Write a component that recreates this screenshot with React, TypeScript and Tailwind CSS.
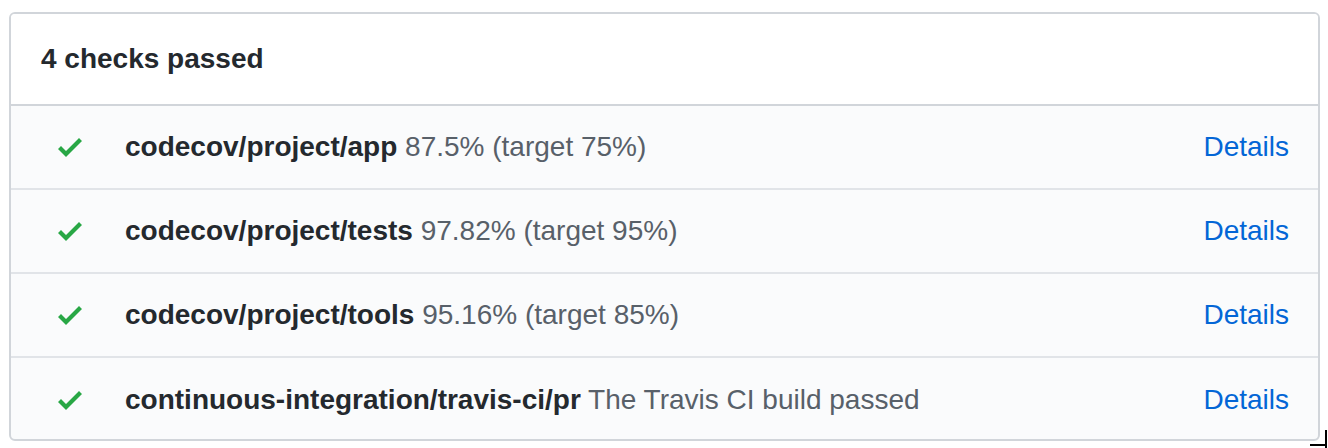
const checks = [
  { name: 'codecov/project/app', desc: '87.5% (target 75%)' },
  { name: 'codecov/project/tests', desc: '97.82% (target 95%)' },
  { name: 'codecov/project/tools', desc: '95.16% (target 85%)' },
  { name: 'continuous-integration/travis-ci/pr', desc: 'The Travis CI build passed' },
];

function CheckIcon() {
  return (
    <svg width="24" height="32" viewBox="0 0 12 16" className="shrink-0 fill-[#28a745]">
      <path fillRule="evenodd" d="M12 5l-8 8-4-4 1.5-1.5L4 10l6.5-6.5L12 5z" />
    </svg>
  );
}

export default function App() {
  return (
    <div
      className="relative w-[1328px] h-[448px] bg-white pt-[12px] pl-[9px] pr-[8px] pb-[7px] text-[28px] text-[#24292e]"
      style={{ fontFamily: '"Liberation Sans", Arial, sans-serif' }}
    >
      <div className="h-full border-2 border-[#d1d5da] rounded-[6px] overflow-hidden flex flex-col bg-[#fafbfc]">
        <div className="h-[92px] shrink-0 flex items-center pl-[30px] font-bold bg-white border-b-2 border-[#d1d5da]">
          4 checks passed
        </div>
        {checks.map((c, i) => (
          <div
            key={c.name}
            className={`h-[84px] shrink-0 flex items-center pl-[47px] pr-[29px] ${i < checks.length - 1 ? 'border-b-2 border-[#e1e4e8]' : ''}`}
          >
            <CheckIcon />
            <div className="ml-[43px] flex-1 whitespace-nowrap">
              <span className="font-bold">{c.name}</span>{' '}
              <span className="text-[#586069]">{c.desc}</span>
            </div>
            <a className="text-[#0366d6]">Details</a>
          </div>
        ))}
      </div>
      <div className="absolute right-[1px] bottom-0 w-[2px] h-[18px] bg-black" />
      <div className="absolute right-[1px] bottom-[2px] w-[17px] h-[2px] bg-black" />
    </div>
  );
}
